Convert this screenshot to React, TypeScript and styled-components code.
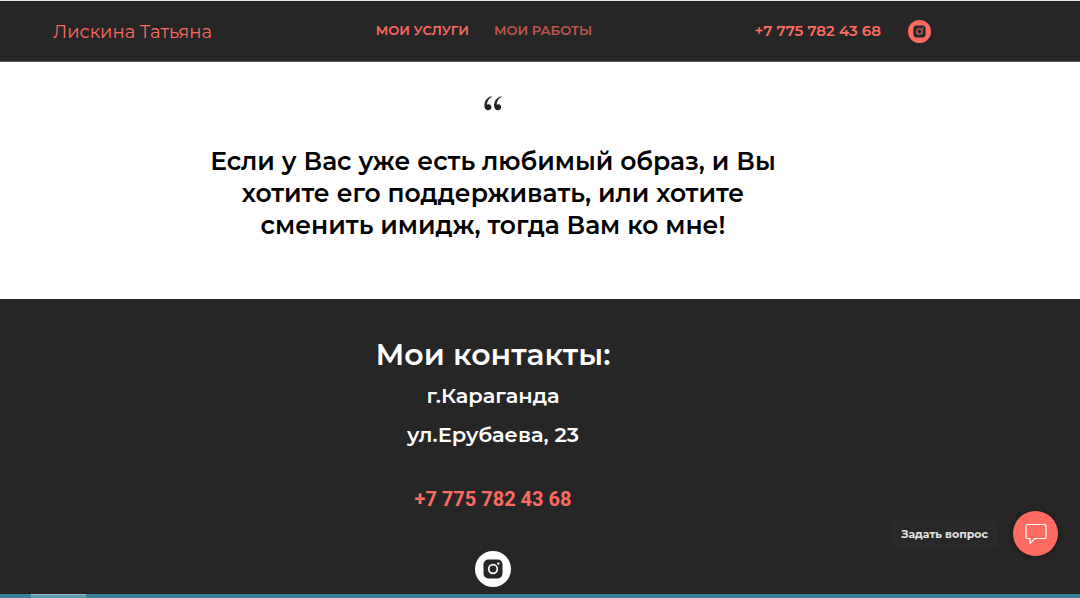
import React from "react";
import styled, { createGlobalStyle } from "styled-components";

const coral = "#ff6b61";
const dark = "#262626";

const GlobalStyle = createGlobalStyle`
  *, *::before, *::after { box-sizing: border-box; }
  body {
    margin: 0;
    background: #fff;
    font-family: Montserrat, Inter, "Open Sans", sans-serif;
  }
  h1, h2, p, blockquote { margin: 0; }
  a { color: inherit; text-decoration: none; }
`;

const Page = styled.div`
  display: flex;
  flex-direction: column;
  min-height: 100vh;
`;

const Header = styled.header`
  display: flex;
  align-items: center;
  height: 62px;
  padding: 0 149px 0 53px;
  background: ${dark};
  border-top: 1px solid #e2ebe8;
  border-bottom: 1px solid #5c5a5b;
  color: ${coral};
`;

const Brand = styled.a`
  flex: 1;
  padding-top: 2px;
  font-size: 18px;
  font-weight: 400;
  white-space: nowrap;
`;

const Nav = styled.nav`
  display: flex;
  gap: 25px;
  padding-right: 16px;
`;

const NavLink = styled.a<{ $faded?: boolean }>`
  font-size: 13px;
  font-weight: 600;
  line-height: 18px;
  padding-bottom: 2px;
  text-transform: uppercase;
  white-space: nowrap;
  opacity: ${(p) => (p.$faded ? 0.7 : 1)};
`;

const HeaderContacts = styled.div`
  flex: 1;
  display: flex;
  justify-content: flex-end;
  align-items: center;
  gap: 27px;
`;

const HeaderPhone = styled.a`
  padding-bottom: 2px;
  font-size: 15px;
  font-weight: 600;
  white-space: nowrap;
`;

const SocialLink = styled.a<{ $size: number }>`
  display: block;
  width: ${(p) => p.$size}px;
  height: ${(p) => p.$size}px;

  svg { display: block; width: 100%; height: 100%; }
`;

const Quote = styled.section`
  display: flex;
  flex-direction: column;
  align-items: center;
  gap: 34px;
  padding: 34px 94px 58px 0;
`;

const QuoteText = styled.blockquote`
  font-size: 25px;
  font-weight: 600;
  line-height: 32px;
  text-align: center;
  color: #000;
`;

const Contacts = styled.footer`
  flex: 1;
  display: flex;
  flex-direction: column;
  align-items: center;
  padding: 36px 94px 7px 0;
  background: ${dark};
  color: #fff;
  text-align: center;
`;

const Title = styled.h2`
  margin-bottom: 1px;
  font-size: 30px;
  font-weight: 600;
  line-height: 40px;
`;

const Address = styled.p`
  font-size: 21px;
  font-weight: 600;
  line-height: 39px;
`;

const Phone = styled.a`
  margin: 30px 0 37px;
  font-family: Roboto, sans-serif;
  font-size: 20px;
  font-weight: 700;
  line-height: 30px;
  color: ${coral};
`;

const Strip = styled.div`
  height: 4px;
  padding-left: 31px;
  background: #3b8298;

  &::before {
    content: "";
    display: block;
    width: 55px;
    height: 4px;
    background: #5b9aac;
    border-top: 1px solid #8fbac6;
  }
`;

const Chat = styled.div`
  position: fixed;
  right: 22px;
  bottom: 42px;
  display: flex;
  align-items: center;
  gap: 15px;
`;

const ChatLabel = styled.label`
  padding: 0 10px;
  border-radius: 3px;
  background: #292929;
  color: #e4e4e4;
  font-size: 11px;
  font-weight: 700;
  line-height: 28px;
`;

const ChatButton = styled.button`
  display: grid;
  place-items: center;
  width: 45px;
  height: 45px;
  padding: 0;
  border: 0;
  border-radius: 50%;
  background: ${coral};
  box-shadow: 0 0 6px rgba(0, 0, 0, 0.3);
  cursor: pointer;
`;

function Instagram({ color }: { color: string }) {
  return (
    <svg viewBox="0 0 36 36" aria-hidden="true">
      <circle cx="18" cy="18" r="18" fill={color} />
      <rect x="8.5" y="8.5" width="19" height="19" rx="4.8" fill={dark} />
      <circle cx="18" cy="18" r="4.3" fill="none" stroke={color} strokeWidth="1.7" />
      <circle cx="23.4" cy="12.6" r="1.2" fill={color} />
    </svg>
  );
}

export default function App() {
  return (
    <>
      <GlobalStyle />
      <Page>
        <Header>
          <Brand href="#">Лискина Татьяна</Brand>
          <Nav>
            <NavLink href="#services">Мои услуги</NavLink>
            <NavLink href="#works" $faded>Мои работы</NavLink>
          </Nav>
          <HeaderContacts>
            <HeaderPhone href="tel:+77757824368">+7 775 782 43 68</HeaderPhone>
            <SocialLink href="#instagram" aria-label="Instagram" $size={23}>
              <Instagram color={coral} />
            </SocialLink>
          </HeaderContacts>
        </Header>

        <Quote>
          <svg width="18" height="15" viewBox="0 0 18 15" fill="#222" aria-hidden="true">
            <path d="M7.6 0.3C3.2 1.4 0.4 5 0.4 9.4C0.4 12.4 1.9 14.3 4.1 14.3C6 14.3 7.4 13 7.4 11.2C7.4 9.5 6.2 8.3 4.6 8.3C3.9 8.3 3.4 8.5 3 8.7C3 5.5 4.7 2.5 7.9 1.1Z" />
            <path d="M17.3 0.3C12.9 1.4 10.1 5 10.1 9.4C10.1 12.4 11.6 14.3 13.8 14.3C15.7 14.3 17.1 13 17.1 11.2C17.1 9.5 15.9 8.3 14.3 8.3C13.6 8.3 13.1 8.5 12.7 8.7C12.7 5.5 14.4 2.5 17.6 1.1Z" />
          </svg>
          <QuoteText>
            Если у Вас уже есть любимый образ, и Вы
            <br />
            хотите его поддерживать, или хотите
            <br />
            сменить имидж, тогда Вам ко мне!
          </QuoteText>
        </Quote>

        <Contacts>
          <Title>Мои контакты:</Title>
          <Address>
            г.Караганда
            <br />
            ул.Ерубаева, 23
          </Address>
          <Phone href="tel:+77757824368">+7 775 782 43 68</Phone>
          <SocialLink href="#instagram" aria-label="Instagram" $size={36}>
            <Instagram color="#fff" />
          </SocialLink>
        </Contacts>
        <Strip />
      </Page>

      <Chat>
        <ChatLabel htmlFor="ask">Задать вопрос</ChatLabel>
        <ChatButton id="ask" type="button" aria-label="Задать вопрос">
          <svg width="22" height="22" viewBox="0 0 22 22" fill="none" stroke="#fff" strokeWidth="1.2" strokeLinejoin="round" aria-hidden="true">
            <path d="M2.5 1.5H19.5Q21 1.5 21 3V14Q21 15.5 19.5 15.5H10L5 20.5V15.5H2.5Q1 15.5 1 14V3Q1 1.5 2.5 1.5Z" />
          </svg>
        </ChatButton>
      </Chat>
    </>
  );
}
